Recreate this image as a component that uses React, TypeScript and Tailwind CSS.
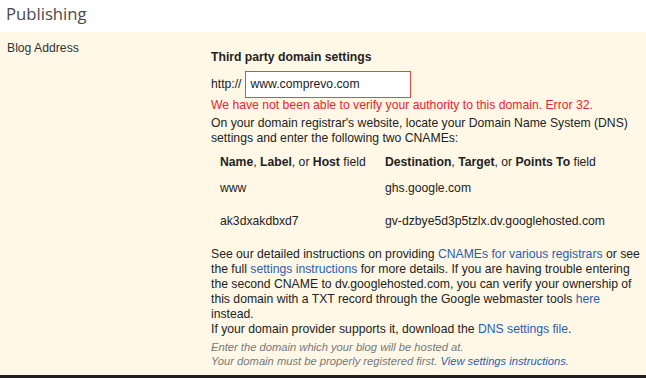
import React from "react";

const link = "text-[#2a5db0]";

export default function App() {
  return (
    <div className="w-[646px] h-[378px] overflow-hidden bg-white text-[#222] font-['Liberation_Sans',Arial,sans-serif]">
      <div className="h-[32px] pl-[6px] pt-[2px] text-[16.7px] leading-[24px] text-[#4a4a4a] font-['Open_Sans',sans-serif]">
        Publishing
      </div>
      <div className="flex h-[346px] bg-[#fff8e7] border-b-[3px] border-[#1e1e1e]">
        <div className="w-[211px] shrink-0 pl-[7px] pt-[9px] text-[12.2px] leading-[15px] text-[#333]">
          Blog Address
        </div>
        <div className="w-[432px] text-[12.2px] leading-[15px]">
          <div className="pt-[18px] font-bold">Third party domain settings</div>
          <div className="flex items-center mt-[6px] h-[27px]">
            <span className="mr-[3px]">http://</span>
            <div className="w-[166px] h-[27px] bg-white border border-[#dd4b4b] pl-[5px] flex items-center">
              www.comprevo.com
            </div>
          </div>
          <div className="text-[#e8252e]">
            We have not been able to verify your authority to this domain. Error 32.
          </div>
          <div className="mt-[3px]">
            On your domain registrar's website, locate your Domain Name System (DNS) settings and enter the following two CNAMEs:
          </div>
          <div className="pl-[9px] mt-[9px]">
            <div className="flex h-[16px]">
              <div className="w-[165px]">
                <b>Name</b>, <b>Label</b>, or <b>Host</b> field
              </div>
              <div>
                <b>Destination</b>, <b>Target</b>, or <b>Points To</b> field
              </div>
            </div>
            <div className="flex mt-[10px] h-[16px]">
              <div className="w-[165px]">www</div>
              <div>ghs.google.com</div>
            </div>
            <div className="flex mt-[17px] h-[16px]">
              <div className="w-[165px]">ak3dxakdbxd7</div>
              <div>gv-dzbye5d3p5tzlx.dv.googlehosted.com</div>
            </div>
          </div>
          <div className="mt-[17px]">
            See our detailed instructions on providing <span className={link}>CNAMEs for various registrars</span> or see the full <span className={link}>settings instructions</span> for more details. If you are having trouble entering the second CNAME to dv.googlehosted.com, you can verify your ownership of this domain with a TXT record through the Google webmaster tools <span className={link}>here</span> instead.
          </div>
          <div>
            If your domain provider supports it, download the <span className={link}>DNS settings file</span>.
          </div>
          <div className="mt-[3px] italic text-[11.2px] leading-[14px] text-[#777]">
            <div>Enter the domain which your blog will be hosted at.</div>
            <div>
              Your domain must be properly registered first. <span className={link}>View settings instructions</span>.
            </div>
          </div>
        </div>
      </div>
    </div>
  );
}
